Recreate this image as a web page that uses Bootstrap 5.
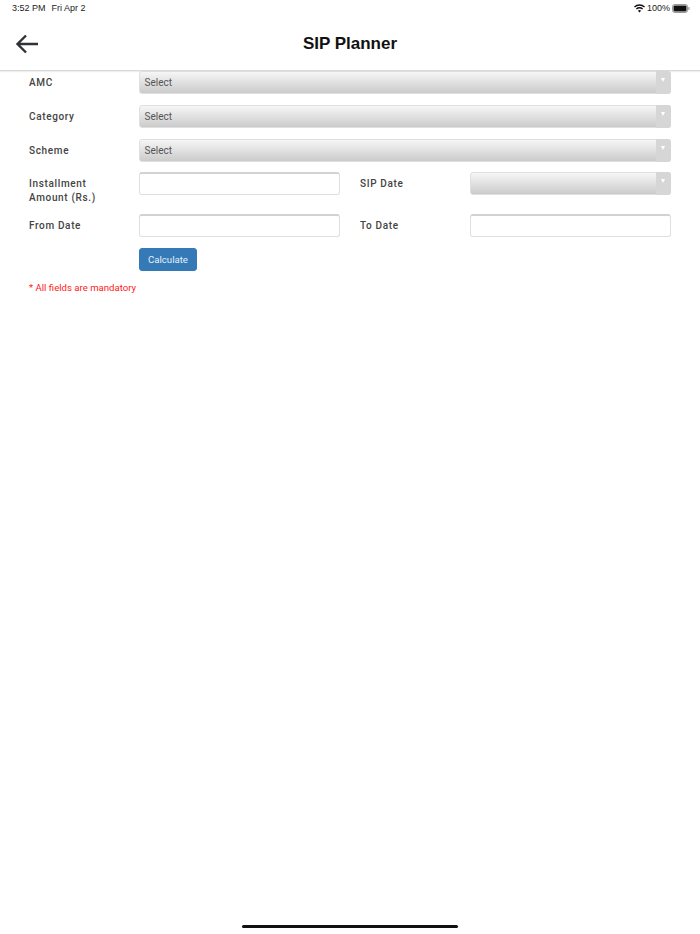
<!DOCTYPE html>
<html lang="en">
<head>
  <meta charset="UTF-8">
  <meta name="viewport" content="width=device-width, initial-scale=1.0">
  <title>SIP Planner</title>
  <link rel="stylesheet" href="https://cdn.jsdelivr.net/npm/bootstrap@5.3.0/dist/css/bootstrap.min.css">
  <style>
    body { font-family: Roboto, "Liberation Sans", sans-serif; background: #fff; min-height: 934px; }
    .status-bar { height: 17px; padding: 0 10px 0 12px; font-size: 9px; line-height: 17px; color: #222; font-family: "Liberation Sans", sans-serif; }
    .status-bar .st-date { margin-left: 6px; }
    .status-right { gap: 2px; }
    .top-bar { height: 54px; padding-top: 17px; border-bottom: 1px solid #d9d9d9; box-shadow: 0 1px 1px #eee; }
    .top-bar .back-btn { left: 14px; top: 14px; width: 26px; height: 26px; }
    .page-title { font-family: "Liberation Sans", sans-serif; font-size: 17px; font-weight: 700; color: #111; line-height: 20px; margin: 0; }
    .plan-form { padding: 0 29px; }
    .plan-row { margin-bottom: 10.8px; }
    .plan-row-tall { margin-bottom: 9.6px; }
    .field-label { width: 110px; flex: none; font-size: 10px; font-weight: 500; line-height: 13.5px; letter-spacing: .65px; color: #444; padding: 5px 20px 0 0; margin: 0; }
    .field-label-mid { margin-left: 20px; }
    .field-half { width: 201px; flex: none; }
    .sel-wrap { height: 23px; }
    .sel-box { height: 23px; padding: 0 24px 0 4.5px; border: 1px solid #dfdfdf; border-radius: 3px; font-size: 10px; line-height: 22px; color: #555; background: linear-gradient(#f6f6f6, #cbcbcb); }
    .sel-arrow { right: 0; top: 0; width: 15px; height: 23px; background: #d6d6d6; border-radius: 0 3px 3px 0; }
    .sel-arrow::after { content: ""; position: absolute; left: 5px; top: 7px; border: 2.5px solid transparent; border-top: 4px solid #fff; }
    .txt-box { height: 23px; padding: 0 5px; border: 1px solid #dfdfdf; border-top: 2px solid #d2d2d2; border-radius: 3px; font-size: 10px; }
    .calc-btn { background: #337ab7; border: 1px solid #337ab7; border-radius: 3px; color: #e8f0f7; font-size: 9.6px; height: 23px; width: 58px; padding: 0; margin-left: 110px; line-height: 21px; }
    .req-note { font-size: 9.6px; color: #ff1a1a; margin: 10px 0 0; line-height: 14px; }
    .home-bar { left: 242px; bottom: 6px; width: 216px; height: 3px; background: #111; border-radius: 2px; }
  </style>
</head>
<body class="position-relative m-0">
  <div class="status-bar d-flex justify-content-between align-items-center">
    <div><span>3:52 PM</span><span class="st-date">Fri Apr 2</span></div>
    <div class="status-right d-flex align-items-center">
      <svg width="11" height="9" viewBox="0 0 22 16"><path d="M11 16l-3.2-3.6a4.6 4.6 0 0 1 6.4 0zM5.8 10.2l-2-2.2a10.6 10.6 0 0 1 14.4 0l-2 2.2a7.6 7.6 0 0 0-10.4 0zM1.9 5.9L0 3.8a16.4 16.4 0 0 1 22 0l-1.9 2.1a13.6 13.6 0 0 0-18.2 0z" fill="#111"/></svg>
      <span>100%</span>
      <svg width="18" height="9" viewBox="0 0 18 9"><rect x=".5" y=".5" width="15" height="8" rx="2" fill="none" stroke="#999"/><rect x="1.5" y="1.5" width="13" height="6" rx="1" fill="#111"/><rect x="16.3" y="3" width="1.2" height="3" rx=".6" fill="#999"/></svg>
    </div>
  </div>

  <header class="top-bar position-relative text-center">
    <a class="back-btn position-absolute" href="#">
      <svg width="26" height="26" viewBox="0 0 26 26"><path d="M24 13H4M12 4.5L3.5 13 12 21.5" fill="none" stroke="#2f3338" stroke-width="2.4"/></svg>
    </a>
    <h1 class="page-title">SIP Planner</h1>
  </header>

  <form class="plan-form">
    <div class="plan-row d-flex">
      <label class="field-label">AMC</label>
      <div class="sel-wrap position-relative flex-grow-1"><div class="sel-box">Select</div><span class="sel-arrow position-absolute"></span></div>
    </div>
    <div class="plan-row d-flex">
      <label class="field-label">Category</label>
      <div class="sel-wrap position-relative flex-grow-1"><div class="sel-box">Select</div><span class="sel-arrow position-absolute"></span></div>
    </div>
    <div class="plan-row d-flex">
      <label class="field-label">Scheme</label>
      <div class="sel-wrap position-relative flex-grow-1"><div class="sel-box">Select</div><span class="sel-arrow position-absolute"></span></div>
    </div>
    <div class="plan-row plan-row-tall d-flex">
      <label class="field-label">Installment Amount (Rs.)</label>
      <input class="txt-box form-control field-half" type="text">
      <label class="field-label field-label-mid">SIP Date</label>
      <div class="sel-wrap position-relative field-half"><div class="sel-box"></div><span class="sel-arrow position-absolute"></span></div>
    </div>
    <div class="plan-row d-flex">
      <label class="field-label">From Date</label>
      <input class="txt-box form-control field-half" type="text">
      <label class="field-label field-label-mid">To Date</label>
      <input class="txt-box form-control field-half" type="text">
    </div>
    <button class="btn calc-btn d-block" type="button">Calculate</button>
    <p class="req-note">* All fields are mandatory</p>
  </form>

  <div class="home-bar position-absolute"></div>
  <script src="https://cdn.jsdelivr.net/npm/bootstrap@5.3.0/dist/js/bootstrap.bundle.min.js"></script>
</body>
</html>
